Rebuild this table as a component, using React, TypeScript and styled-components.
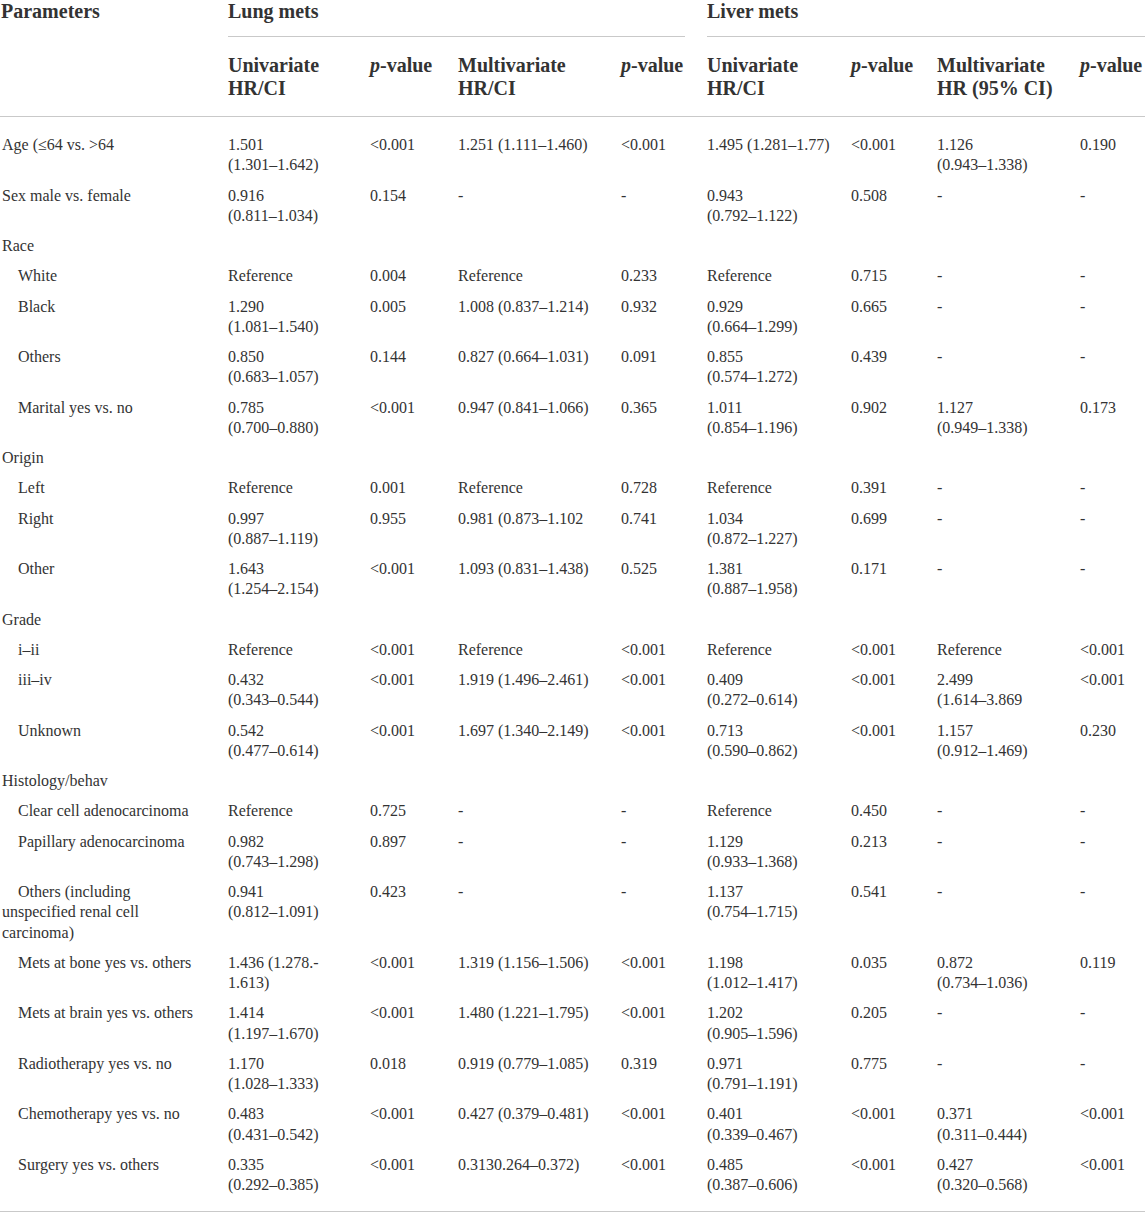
import styled, { createGlobalStyle } from 'styled-components'

const GlobalStyle = createGlobalStyle`
  html, body {
    margin: 0;
    padding: 0;
    background: #ffffff;
  }
  body {
    font-family: "Liberation Serif", "Times New Roman", serif;
    color: #333333;
  }
`

const Page = styled.div`
  width: 1145px;
  overflow: hidden;
`

const Table = styled.table`
  width: 1145px;
  border-collapse: collapse;
  table-layout: fixed;
  border-bottom: 1px solid #c9c9c9;
`

const HeadCell = styled.th<{ $first?: boolean }>`
  padding: ${({ $first }) => ($first ? '0 0 0 1px' : '17px 0 16px 0')};
  font-size: 20px;
  line-height: ${({ $first }) => ($first ? '22px' : '23px')};
  font-weight: bold;
  text-align: left;
  vertical-align: top;
  white-space: pre;
  color: #333333;
  border-bottom: 1px solid #c9c9c9;
`

const GroupCell = styled.th`
  padding: 0;
  text-align: left;
  vertical-align: top;
`

const GroupLabel = styled.div<{ $gap: number }>`
  margin-right: ${({ $gap }) => $gap}px;
  padding-bottom: 14px;
  font-size: 20px;
  line-height: 22px;
  font-weight: bold;
  color: #333333;
  border-bottom: 1px solid #c9c9c9;
`

const Row = styled.tr`
  &:first-child td {
    padding-top: 18px;
  }
  &:last-child td {
    padding-bottom: 16px;
  }
`

const Cell = styled.td<{ $indent?: boolean; $label?: boolean }>`
  padding: 5px 0 5px ${({ $label }) => ($label ? '2px' : '0')};
  font-size: 16px;
  line-height: 20.25px;
  vertical-align: top;
  white-space: pre;
  text-indent: ${({ $indent }) => ($indent ? '16px' : '0')};
  color: #333333;
`

const widths = [228, 142, 88, 163, 86, 144, 86, 143, 65]

type DataRow = { label: string; indent?: boolean; cells?: string[] }

const rows: DataRow[] = [
  { label: 'Age (≤64 vs. >64', cells: ['1.501\n(1.301–1.642)', '<0.001', '1.251 (1.111–1.460)', '<0.001', '1.495 (1.281–1.77)', '<0.001', '1.126\n(0.943–1.338)', '0.190'] },
  { label: 'Sex male vs. female', cells: ['0.916\n(0.811–1.034)', '0.154', '-', '-', '0.943\n(0.792–1.122)', '0.508', '-', '-'] },
  { label: 'Race' },
  { label: 'White', indent: true, cells: ['Reference', '0.004', 'Reference', '0.233', 'Reference', '0.715', '-', '-'] },
  { label: 'Black', indent: true, cells: ['1.290\n(1.081–1.540)', '0.005', '1.008 (0.837–1.214)', '0.932', '0.929\n(0.664–1.299)', '0.665', '-', '-'] },
  { label: 'Others', indent: true, cells: ['0.850\n(0.683–1.057)', '0.144', '0.827 (0.664–1.031)', '0.091', '0.855\n(0.574–1.272)', '0.439', '-', '-'] },
  { label: 'Marital yes vs. no', indent: true, cells: ['0.785\n(0.700–0.880)', '<0.001', '0.947 (0.841–1.066)', '0.365', '1.011\n(0.854–1.196)', '0.902', '1.127\n(0.949–1.338)', '0.173'] },
  { label: 'Origin' },
  { label: 'Left', indent: true, cells: ['Reference', '0.001', 'Reference', '0.728', 'Reference', '0.391', '-', '-'] },
  { label: 'Right', indent: true, cells: ['0.997\n(0.887–1.119)', '0.955', '0.981 (0.873–1.102', '0.741', '1.034\n(0.872–1.227)', '0.699', '-', '-'] },
  { label: 'Other', indent: true, cells: ['1.643\n(1.254–2.154)', '<0.001', '1.093 (0.831–1.438)', '0.525', '1.381\n(0.887–1.958)', '0.171', '-', '-'] },
  { label: 'Grade' },
  { label: 'i–ii', indent: true, cells: ['Reference', '<0.001', 'Reference', '<0.001', 'Reference', '<0.001', 'Reference', '<0.001'] },
  { label: 'iii–iv', indent: true, cells: ['0.432\n(0.343–0.544)', '<0.001', '1.919 (1.496–2.461)', '<0.001', '0.409\n(0.272–0.614)', '<0.001', '2.499\n(1.614–3.869', '<0.001'] },
  { label: 'Unknown', indent: true, cells: ['0.542\n(0.477–0.614)', '<0.001', '1.697 (1.340–2.149)', '<0.001', '0.713\n(0.590–0.862)', '<0.001', '1.157\n(0.912–1.469)', '0.230'] },
  { label: 'Histology/behav' },
  { label: 'Clear cell adenocarcinoma', indent: true, cells: ['Reference', '0.725', '-', '-', 'Reference', '0.450', '-', '-'] },
  { label: 'Papillary adenocarcinoma', indent: true, cells: ['0.982\n(0.743–1.298)', '0.897', '-', '-', '1.129\n(0.933–1.368)', '0.213', '-', '-'] },
  { label: 'Others (including\nunspecified renal cell\ncarcinoma)', indent: true, cells: ['0.941\n(0.812–1.091)', '0.423', '-', '-', '1.137\n(0.754–1.715)', '0.541', '-', '-'] },
  { label: 'Mets at bone yes vs. others', indent: true, cells: ['1.436 (1.278.-\n1.613)', '<0.001', '1.319 (1.156–1.506)', '<0.001', '1.198\n(1.012–1.417)', '0.035', '0.872\n(0.734–1.036)', '0.119'] },
  { label: 'Mets at brain yes vs. others', indent: true, cells: ['1.414\n(1.197–1.670)', '<0.001', '1.480 (1.221–1.795)', '<0.001', '1.202\n(0.905–1.596)', '0.205', '-', '-'] },
  { label: 'Radiotherapy yes vs. no', indent: true, cells: ['1.170\n(1.028–1.333)', '0.018', '0.919 (0.779–1.085)', '0.319', '0.971\n(0.791–1.191)', '0.775', '-', '-'] },
  { label: 'Chemotherapy yes vs. no', indent: true, cells: ['0.483\n(0.431–0.542)', '<0.001', '0.427 (0.379–0.481)', '<0.001', '0.401\n(0.339–0.467)', '<0.001', '0.371\n(0.311–0.444)', '<0.001'] },
  { label: 'Surgery yes vs. others', indent: true, cells: ['0.335\n(0.292–0.385)', '<0.001', '0.3130.264–0.372)', '<0.001', '0.485\n(0.387–0.606)', '<0.001', '0.427\n(0.320–0.568)', '<0.001'] },
]

const PValue = () => (
  <>
    <i>p</i>-value
  </>
)

export default function App() {
  return (
    <Page>
      <GlobalStyle />
      <Table>
        <colgroup>
          {widths.map((w, i) => (
            <col key={i} style={{ width: w }} />
          ))}
        </colgroup>
        <thead>
          <tr>
            <HeadCell $first rowSpan={2}>Parameters</HeadCell>
            <GroupCell colSpan={4}>
              <GroupLabel $gap={22}>Lung mets</GroupLabel>
            </GroupCell>
            <GroupCell colSpan={4}>
              <GroupLabel $gap={0}>Liver mets</GroupLabel>
            </GroupCell>
          </tr>
          <tr>
            <HeadCell>{'Univariate\nHR/CI'}</HeadCell>
            <HeadCell><PValue /></HeadCell>
            <HeadCell>{'Multivariate\nHR/CI'}</HeadCell>
            <HeadCell><PValue /></HeadCell>
            <HeadCell>{'Univariate\nHR/CI'}</HeadCell>
            <HeadCell><PValue /></HeadCell>
            <HeadCell>{'Multivariate\nHR (95% CI)'}</HeadCell>
            <HeadCell><PValue /></HeadCell>
          </tr>
        </thead>
        <tbody>
          {rows.map((row, index) => (
            <Row key={index}>
              <Cell $label $indent={row.indent}>{row.label}</Cell>
              {(row.cells ?? ['', '', '', '', '', '', '', '']).map((value, j) => (
                <Cell key={j}>{value}</Cell>
              ))}
            </Row>
          ))}
        </tbody>
      </Table>
    </Page>
  )
}
